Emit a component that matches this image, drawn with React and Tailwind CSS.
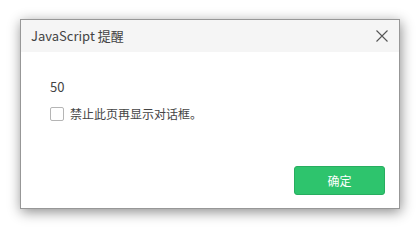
import React from 'react';

const App = () => {
  return (
    <div className="w-[420px] h-[228px] bg-white pt-[19px] pl-[20px]" style={{ fontFamily: '"Noto Sans CJK SC", "Noto Sans", sans-serif' }}>
      {/* Dialog */}
      <div className="w-[380px] h-[190px] bg-white border border-[#979797] shadow-[1px_3px_12px_rgba(0,0,0,0.45)] flex flex-col">
        <div className="h-[32px] bg-[#f5f5f5] flex items-center justify-between pl-[10px] pr-[10px]">
          <span className="text-[13px] text-[#444]">JavaScript 提醒</span>
          <svg width="14" height="14" viewBox="0 0 14 14" className="text-[#555]">
            <path d="M1.5 1.5 L12.5 12.5 M12.5 1.5 L1.5 12.5" stroke="currentColor" strokeWidth="1.1" fill="none" />
          </svg>
        </div>
        <div className="flex-1 flex flex-col pl-[29px] pr-[14px] pt-[26px]">
          <div className="text-[13px] text-[#444] leading-[18px]">50</div>
          <label className="flex items-center gap-[6px] mt-[9px]">
            <span className="w-[14px] h-[14px] border border-[#b5b5b5] rounded-[2px] bg-white" />
            <span className="text-[12px] text-[#444]">禁止此页再显示对话框。</span>
          </label>
          <div className="flex-1" />
          <div className="flex justify-end pb-[13px]">
            <button className="w-[91px] h-[29px] rounded-[3px] bg-[#2ec46d] border border-[#27ad5f] text-white text-[12px]">确定</button>
          </div>
        </div>
      </div>
    </div>
  );
};

export default App;
